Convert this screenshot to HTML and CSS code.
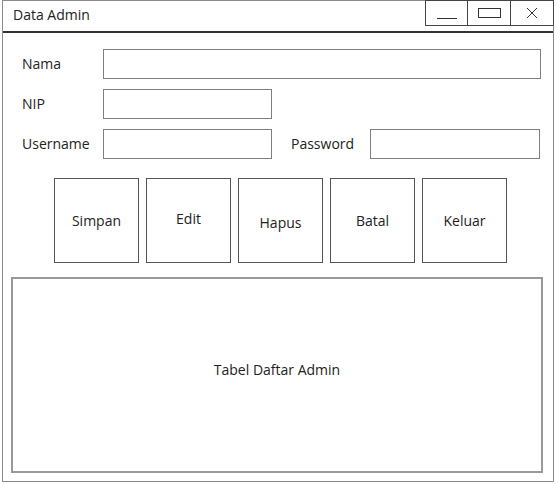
FILE: index.html
```html
<!DOCTYPE html>
<html lang="id">
<head>
  <meta charset="UTF-8" />
  <title>Data Admin</title>
  <link rel="stylesheet" href="styles.css">
</head>
<body>

<div class="window">
  <div class="titlebar">
    <span class="title">Data Admin</span>
    <div class="controls">
      <span class="ctl ctl-min"><i></i></span>
      <span class="ctl ctl-max"><i></i></span>
      <span class="ctl ctl-close">
        <svg width="14" height="14" viewBox="0 0 14 14">
          <path d="M2 2 L12 12 M12 2 L2 12" stroke="#333" stroke-width="1" fill="none" />
        </svg>
      </span>
    </div>
  </div>

  <div class="content">
    <div class="row">
      <label class="lbl">Nama</label>
      <div class="field field-wide"></div>
    </div>
    <div class="row">
      <label class="lbl">NIP</label>
      <div class="field"></div>
    </div>
    <div class="row">
      <label class="lbl">Username</label>
      <div class="field"></div>
      <label class="lbl lbl-pass">Password</label>
      <div class="field field-pass"></div>
    </div>

    <div class="buttons">
      <div class="btn">Simpan</div>
      <div class="btn btn-up">Edit</div>
      <div class="btn btn-down">Hapus</div>
      <div class="btn">Batal</div>
      <div class="btn">Keluar</div>
    </div>

    <div class="table-box">Tabel Daftar Admin</div>
  </div>
</div>

</body>
</html>
```

FILE: styles.css
```css
body {
  margin: 0;
  background: #fff;
  font-family: "Open Sans", "Noto Sans", sans-serif;
  font-size: 14px;
  color: #222;
}

.window {
  margin-left: 2px;
  width: 550px;
  height: 480px;
  border: 1px solid #8a8a8a;
}

/* title bar */
.titlebar {
  height: 30px;
  border-bottom: 2px solid #333;
  display: flex;
  justify-content: space-between;
  align-items: flex-start;
}

.title {
  padding: 4px 0 0 10px;
  font-size: 14px;
}

.controls {
  display: flex;
  margin-top: -1px;
  margin-right: -1px;
}

.ctl {
  width: 42px;
  height: 24px;
  border: 1px solid #444;
  border-right: none;
  display: flex;
  align-items: center;
  justify-content: center;
}

.ctl:first-child {
  width: 41px;
}

.ctl:last-child {
  border-right: 1px solid #444;
}

.ctl-min i {
  display: block;
  width: 20px;
  height: 1px;
  background: #333;
  margin-top: 10px;
}

.ctl-max i {
  display: block;
  width: 21px;
  height: 8px;
  border: 1px solid #333;
}

/* form */
.content {
  padding: 15px 0 0 19px;
}

.row {
  display: flex;
  align-items: center;
  height: 31px;
  margin-bottom: 9px;
}

.lbl {
  width: 81px;
}

.lbl-pass {
  width: 79px;
  margin-left: 19px;
}

.field {
  width: 167px;
  height: 28px;
  border: 1.5px solid #7f7f7f;
}

.field-wide {
  width: 436px;
}

.field-pass {
  width: 168px;
}

/* buttons */
.buttons {
  display: flex;
  gap: 7px;
  margin: 19px 0 0 32px;
}

.btn {
  width: 83px;
  height: 83px;
  border: 1px solid #555;
  display: flex;
  align-items: center;
  justify-content: center;
}

.btn-up {
  padding-bottom: 4px;
  height: 79px;
}

.btn-down {
  padding-top: 3px;
  height: 80px;
}

/* table placeholder */
.table-box {
  margin: 14px 0 0 -11px;
  width: 528px;
  height: 180px;
  padding-bottom: 12px;
  border: 2px solid #999;
  display: flex;
  align-items: center;
  justify-content: center;
}
```
